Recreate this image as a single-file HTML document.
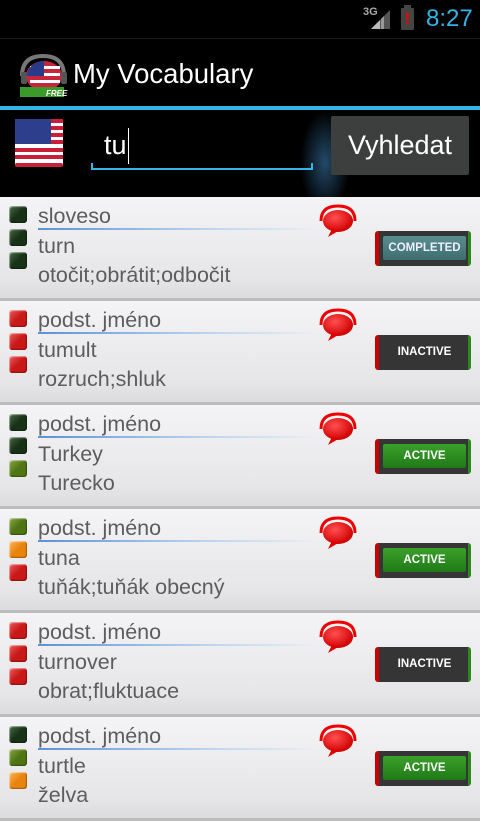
<!DOCTYPE html>
<html><head><meta charset="utf-8"><style>
*{margin:0;padding:0;box-sizing:border-box}
body{width:480px;height:800px;overflow:hidden;background:#000;font-family:"Liberation Sans","DejaVu Sans",sans-serif;position:relative}
.a{position:absolute}
.row{position:absolute;left:0;width:480px;height:104px;background:linear-gradient(#f4f4f6,#e6e6e8 80%,#dcdcde);border-bottom:3px solid #bdbdbd}
.sq{position:absolute;left:9px;width:18px;height:17px;border-radius:3px;box-shadow:inset 1px 1px 1px rgba(255,255,255,.5),inset -1px -1px 1px rgba(0,0,0,.3)}
.dk{background:linear-gradient(135deg,#4a6a4a,#173217 50%)}
.rd{background:linear-gradient(135deg,#ee5a5a,#c81818 50%)}
.ol{background:linear-gradient(135deg,#8aa84a,#4f7414 50%)}
.or{background:linear-gradient(135deg,#fbb860,#e8840e 50%)}
.t{position:absolute;left:38px;font-size:21.5px;color:#5d5d5d;white-space:nowrap;line-height:26px}
.ul{position:absolute;left:38px;top:31px;width:280px;height:2px;background:linear-gradient(90deg,#5a92d8,#bcd4f0 60%,rgba(255,255,255,0))}
.btn{position:absolute;left:375px;top:34px;width:96px;height:35px;background:#353535;border-radius:3px;border-left:4px solid #c00;border-right:3px solid #2a8a1a}
.btn span{position:absolute;left:4px;right:2px;top:5px;height:24px;font-size:11.5px;font-weight:bold;color:#fff;text-align:center;line-height:24px;border-radius:2px}
.cp span{background:linear-gradient(#5a8e8e,#3c6e6e);color:#eef}
.ac span{background:linear-gradient(#3aa02a,#207a18)}
.bub{position:absolute;left:318px;top:6px}
</style></head><body>
<div class="a" style="left:363px;top:6px;color:#aaa;font-size:11px;font-weight:bold">3G</div>
<svg class="a" style="left:370px;top:9px" width="22" height="21"><polygon points="1,20 20,1 20,20" fill="#555"/><polygon points="1,20 10,11 10,20" fill="#bbb"/><polygon points="11,20 11,10 14,7 14,20" fill="#999"/></svg>
<div class="a" style="left:401px;top:8px;width:13px;height:22px;background:#444;border-radius:1px"></div>
<div class="a" style="left:404px;top:5px;width:7px;height:3px;background:#444"></div>
<div class="a" style="left:402px;top:9px;width:11px;height:20px;color:#e00;font-weight:bold;font-size:17px;text-align:center;line-height:20px">!</div>
<div class="a" style="left:426px;top:5px;color:#33b5e5;font-size:24px">8:27</div>
<div class="a" style="left:0;top:38px;width:480px;height:1px;background:#1a1a1a"></div>
<svg class="a" style="left:18px;top:52px" width="50" height="48">
<path d="M4,24 Q4,4 25,4 Q46,4 46,24" fill="none" stroke="#777" stroke-width="4"/>
<ellipse cx="26" cy="24" rx="18" ry="15" fill="#c8243a"/>
<rect x="12" y="14" width="30" height="3" fill="#fff"/><rect x="12" y="21" width="30" height="3" fill="#fff"/><rect x="12" y="28" width="30" height="3" fill="#fff"/>
<path d="M9,24 A17,15 0 0 1 26,9 L26,24 Z" fill="#2a3a8a"/>
<rect x="3" y="20" width="6" height="12" rx="2" fill="#555"/><rect x="43" y="20" width="6" height="12" rx="2" fill="#555"/>
<rect x="2" y="35" width="44" height="10" fill="#3a9a2a"/>
<text x="28" y="44" font-size="8" font-weight="bold" font-style="italic" fill="#fff" font-family="Liberation Sans">FREE</text>
</svg>
<div class="a" style="left:73px;top:58px;color:#fff;font-size:27.5px">My Vocabulary</div>
<div class="a" style="left:0;top:106px;width:480px;height:4px;background:#33b5e5"></div>
<div class="a" style="left:300px;top:110px;width:50px;height:87px;background:radial-gradient(ellipse at 50% 60%,#234a6a,rgba(0,0,0,0) 70%)"></div>
<svg class="a" style="left:15px;top:119px" width="48" height="48">
<rect width="48" height="48" rx="3" fill="#fff"/>
<g fill="#c8203a"><rect y="0" width="48" height="4"/><rect y="7" width="48" height="4"/><rect y="14" width="48" height="4"/><rect y="21" width="48" height="4"/><rect y="29" width="48" height="4"/><rect y="36" width="48" height="4"/><rect y="44" width="48" height="4" rx="2"/></g>
<rect width="36" height="25" fill="#2c3e8c"/>
</svg>
<div class="a" style="left:104px;top:130px;color:#fff;font-size:27px">tu</div>
<div class="a" style="left:128px;top:128px;width:1px;height:36px;background:#fff"></div>
<div class="a" style="left:91px;top:168px;width:222px;height:2px;background:#33b5e5"></div>
<div class="a" style="left:91px;top:163px;width:2px;height:6px;background:#33b5e5"></div>
<div class="a" style="left:311px;top:163px;width:2px;height:6px;background:#33b5e5"></div>
<div class="a" style="left:331px;top:116px;width:138px;height:59px;background:#3d3f3e;border-radius:2px;color:#fff;font-size:27px;text-align:center;line-height:59px">Vyhledat</div>

<svg width="0" height="0" style="position:absolute"><defs><radialGradient id="g" cx="40%" cy="35%" r="65%"><stop offset="0" stop-color="#ff5050"/><stop offset="1" stop-color="#d00000"/></radialGradient></defs></svg>

<div class="row" style="top:197px">
<div class="sq dk" style="top:9px"></div><div class="sq dk" style="top:32px"></div><div class="sq dk" style="top:55px"></div>
<div class="t" style="top:6px">sloveso</div><div class="ul"></div><div class="t" style="top:36px">turn</div><div class="t" style="top:65px">otočit;obrátit;odbočit</div>
<svg class="bub" width="40" height="36"><path d="M3,18 Q3,3 20,3 Q37,3 37,18" fill="none" stroke="#e00" stroke-width="3"/><ellipse cx="20" cy="18" rx="15" ry="11" fill="url(#g)"/><path d="M14,26 L10,34 L22,27 Z" fill="#d00"/></svg>
<div class="btn cp"><span>COMPLETED</span></div></div>

<div class="row" style="top:301px">
<div class="sq rd" style="top:9px"></div><div class="sq rd" style="top:32px"></div><div class="sq rd" style="top:55px"></div>
<div class="t" style="top:6px">podst. jméno</div><div class="ul"></div><div class="t" style="top:36px">tumult</div><div class="t" style="top:65px">rozruch;shluk</div>
<svg class="bub" width="40" height="36"><path d="M3,18 Q3,3 20,3 Q37,3 37,18" fill="none" stroke="#e00" stroke-width="3"/><ellipse cx="20" cy="18" rx="15" ry="11" fill="url(#g)"/><path d="M14,26 L10,34 L22,27 Z" fill="#d00"/></svg>
<div class="btn in"><span>INACTIVE</span></div></div>

<div class="row" style="top:405px">
<div class="sq dk" style="top:9px"></div><div class="sq dk" style="top:32px"></div><div class="sq ol" style="top:55px"></div>
<div class="t" style="top:6px">podst. jméno</div><div class="ul"></div><div class="t" style="top:36px">Turkey</div><div class="t" style="top:65px">Turecko</div>
<svg class="bub" width="40" height="36"><path d="M3,18 Q3,3 20,3 Q37,3 37,18" fill="none" stroke="#e00" stroke-width="3"/><ellipse cx="20" cy="18" rx="15" ry="11" fill="url(#g)"/><path d="M14,26 L10,34 L22,27 Z" fill="#d00"/></svg>
<div class="btn ac"><span>ACTIVE</span></div></div>

<div class="row" style="top:509px">
<div class="sq ol" style="top:9px"></div><div class="sq or" style="top:32px"></div><div class="sq rd" style="top:55px"></div>
<div class="t" style="top:6px">podst. jméno</div><div class="ul"></div><div class="t" style="top:36px">tuna</div><div class="t" style="top:65px">tuňák;tuňák obecný</div>
<svg class="bub" width="40" height="36"><path d="M3,18 Q3,3 20,3 Q37,3 37,18" fill="none" stroke="#e00" stroke-width="3"/><ellipse cx="20" cy="18" rx="15" ry="11" fill="url(#g)"/><path d="M14,26 L10,34 L22,27 Z" fill="#d00"/></svg>
<div class="btn ac"><span>ACTIVE</span></div></div>

<div class="row" style="top:613px">
<div class="sq rd" style="top:9px"></div><div class="sq rd" style="top:32px"></div><div class="sq rd" style="top:55px"></div>
<div class="t" style="top:6px">podst. jméno</div><div class="ul"></div><div class="t" style="top:36px">turnover</div><div class="t" style="top:65px">obrat;fluktuace</div>
<svg class="bub" width="40" height="36"><path d="M3,18 Q3,3 20,3 Q37,3 37,18" fill="none" stroke="#e00" stroke-width="3"/><ellipse cx="20" cy="18" rx="15" ry="11" fill="url(#g)"/><path d="M14,26 L10,34 L22,27 Z" fill="#d00"/></svg>
<div class="btn in"><span>INACTIVE</span></div></div>

<div class="row" style="top:717px">
<div class="sq dk" style="top:9px"></div><div class="sq ol" style="top:32px"></div><div class="sq or" style="top:55px"></div>
<div class="t" style="top:6px">podst. jméno</div><div class="ul"></div><div class="t" style="top:36px">turtle</div><div class="t" style="top:65px">želva</div>
<svg class="bub" width="40" height="36"><path d="M3,18 Q3,3 20,3 Q37,3 37,18" fill="none" stroke="#e00" stroke-width="3"/><ellipse cx="20" cy="18" rx="15" ry="11" fill="url(#g)"/><path d="M14,26 L10,34 L22,27 Z" fill="#d00"/></svg>
<div class="btn ac"><span>ACTIVE</span></div></div>
</body></html>
